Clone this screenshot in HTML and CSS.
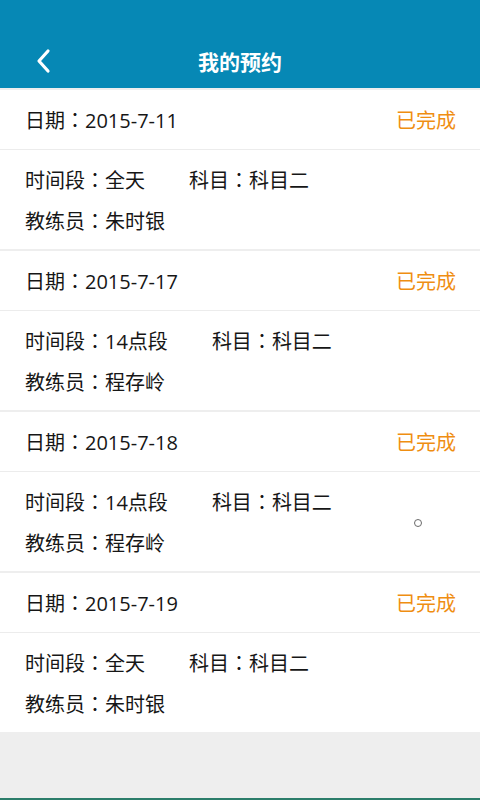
FILE: index.html
```html
<!DOCTYPE html>
<html lang="zh">
<head>
<meta charset="utf-8">
<title>我的预约</title>
<link rel="stylesheet" href="styles.css">
</head>
<body>
<div class="app">
  <header class="topbar">
    <div class="toolbar">
      <span class="back">
        <svg width="16" height="26" viewBox="0 0 16 26"><path d="M13 3 L4 13 L13 23" fill="none" stroke="#fff" stroke-width="3.2" stroke-linecap="round" stroke-linejoin="round"/></svg>
      </span>
      <h1 class="title">我的预约</h1>
    </div>
  </header>
  <main class="list">
    <section class="card">
      <div class="card-head"><span class="date">日期<span class="sep" lang="ja">：</span>2015-7-11</span><span class="status">已完成</span></div>
      <div class="card-body">
        <div class="line"><span>时间段<span class="sep" lang="ja">：</span>全天</span><span class="subject">科目<span class="sep" lang="ja">：</span>科目二</span></div>
        <div class="line"><span>教练员<span class="sep" lang="ja">：</span>朱时银</span></div>
      </div>
    </section>
    <section class="card">
      <div class="card-head"><span class="date">日期<span class="sep" lang="ja">：</span>2015-7-17</span><span class="status">已完成</span></div>
      <div class="card-body">
        <div class="line"><span>时间段<span class="sep" lang="ja">：</span>14点段</span><span class="subject">科目<span class="sep" lang="ja">：</span>科目二</span></div>
        <div class="line"><span>教练员<span class="sep" lang="ja">：</span>程存岭</span></div>
      </div>
    </section>
    <section class="card">
      <div class="card-head"><span class="date">日期<span class="sep" lang="ja">：</span>2015-7-18</span><span class="status">已完成</span></div>
      <div class="card-body">
        <div class="line"><span>时间段<span class="sep" lang="ja">：</span>14点段</span><span class="subject">科目<span class="sep" lang="ja">：</span>科目二</span></div>
        <div class="line"><span>教练员<span class="sep" lang="ja">：</span>程存岭</span></div>
      </div>
    </section>
    <section class="card">
      <div class="card-head"><span class="date">日期<span class="sep" lang="ja">：</span>2015-7-19</span><span class="status">已完成</span></div>
      <div class="card-body">
        <div class="line"><span>时间段<span class="sep" lang="ja">：</span>全天</span><span class="subject">科目<span class="sep" lang="ja">：</span>科目二</span></div>
        <div class="line"><span>教练员<span class="sep" lang="ja">：</span>朱时银</span></div>
      </div>
    </section>
  </main>
  <div class="bottom-line"></div>
  <span class="dot"></span>
</div>
</body>
</html>
```

FILE: styles.css
```css
html, body {
  margin: 0;
  padding: 0;
}
body {
  background: #eeeeee;
  font-family: "Open Sans", "Noto Sans CJK SC", sans-serif;
  color: #161616;
}
.app {
  position: relative;
  width: 480px;
  height: 800px;
  display: flex;
  flex-direction: column;
  background: #eeeeee;
  overflow: hidden;
}
.topbar {
  background: #0688b5;
  height: 88px;
  padding-top: 33px;
  box-sizing: border-box;
}
.toolbar {
  position: relative;
  height: 56px;
  display: flex;
  align-items: center;
  justify-content: center;
}
.back {
  position: absolute;
  left: 35px;
  top: 15px;
  width: 16px;
  height: 26px;
  display: flex;
}
.title {
  margin: 0;
  font-family: "Noto Sans CJK SC", sans-serif;
  font-size: 21px;
  font-weight: 700;
  color: #ffffff;
  line-height: 56px;
}
.list {
  display: flex;
  flex-direction: column;
}
.card {
  margin-top: 2px;
  background: #ffffff;
}
.card-head {
  height: 59px;
  display: flex;
  align-items: center;
  justify-content: space-between;
  padding: 0 24px 0 25px;
  border-bottom: 1px solid #ececec;
  font-size: 20px;
}
.sep {
  display: inline-block;
  width: 1em;
  text-align: center;
  font-family: "Noto Sans CJK JP", sans-serif;
  text-spacing-trim: space-all;
}
.status {
  color: #ef8e12;
}
.card-body {
  padding: 15px 25px 13px;
  display: flex;
  flex-direction: column;
  gap: 11px;
  font-size: 20px;
}
.line {
  line-height: 30px;
  height: 30px;
  display: flex;
}
.subject {
  margin-left: 44px;
}
.bottom-line {
  margin-top: auto;
  height: 2px;
  background: #2b7d6a;
}
.dot {
  position: absolute;
  left: 414px;
  top: 519px;
  width: 6px;
  height: 6px;
  border: 1.5px solid #6a6a6a;
  border-radius: 50%;
}
```
